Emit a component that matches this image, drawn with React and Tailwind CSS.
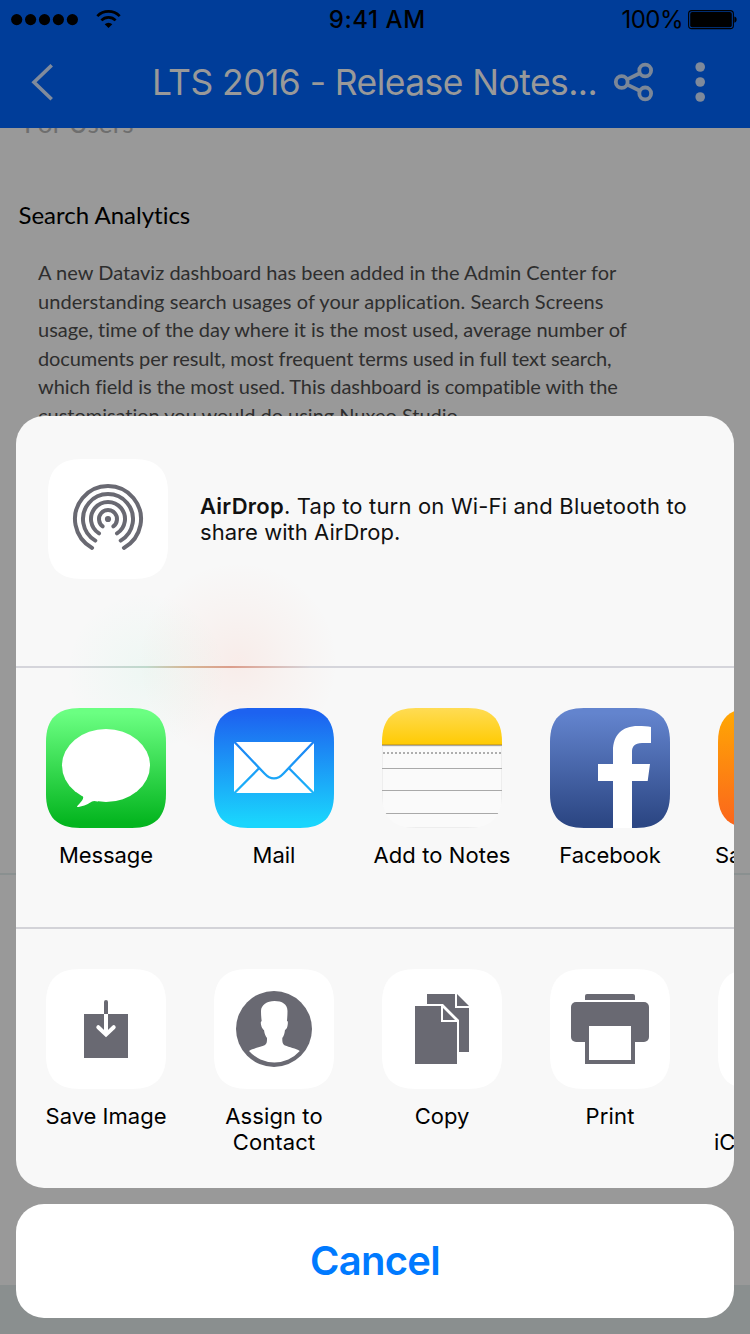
const TILE = "M0 34C0 11 11 0 34 0H86C109 0 120 11 120 34V86C120 109 109 120 86 120H34C11 120 0 109 0 86Z";

function StatusBar() {
  return (
    <div className="flex h-10 items-center justify-between pl-[11px] pr-3 text-black">
      <svg className="h-10 w-[112px]" viewBox="11 0 112 40">
        {[16.7, 30.6, 44.5, 58.4, 72.4].map((x) => (
          <circle key={x} cx={x} cy="19.6" r="5.6" />
        ))}
        <g fill="none" stroke="#000" strokeWidth="2.7">
          <path d="M97.3 16.1A15.8 15.8 0 0 1 119.7 16.1" />
          <path d="M101.4 20.4A9.9 9.9 0 0 1 115.6 20.4" />
        </g>
        <path d="M104.7 24.2A5.4 5.4 0 0 1 112.3 24.2L108.5 28Z" />
      </svg>
      <div className="ml-[10px] whitespace-nowrap text-[24px] font-medium leading-10 tracking-[0.6px]">9:41 AM</div>
      <div className="flex items-center">
        <span className="mr-[5px] whitespace-nowrap text-[24px] leading-10 tracking-[-0.5px]">100%</span>
        <svg className="h-10 w-[50px]" viewBox="688 0 50 40">
          <rect x="688.6" y="10.6" width="44.8" height="18" rx="3.2" fill="none" stroke="#000" strokeWidth="1.1" />
          <rect x="690.2" y="12" width="41.6" height="15.2" rx="2" />
          <path d="M734.4 16.5C737.4 17 737.4 22.2 734.4 22.7Z" />
        </svg>
      </div>
    </div>
  );
}

function NavBar() {
  return (
    <div className="flex h-[88px] items-center">
      <svg className="h-[88px] w-[152px] shrink-0" viewBox="0 40 152 88">
        <path d="M51.7 65.2L34 82.2L51.7 99.2" fill="none" stroke="#808b9c" strokeWidth="3.6" />
      </svg>
      <h1 className="mb-0.5 w-[448px] whitespace-nowrap text-[35.5px] font-normal leading-[44px] tracking-[-0.57px] text-[#999999]">
        LTS 2016 - Release Notes...
      </h1>
      <svg className="h-[88px] w-[150px] shrink-0" viewBox="600 40 150 88">
        <g fill="none" stroke="#7b8798" strokeWidth="3.8">
          <circle cx="621.7" cy="82" r="5.9" />
          <circle cx="645.2" cy="70.5" r="5.9" />
          <circle cx="645.2" cy="93.4" r="5.9" />
          <path d="M627.2 79.4L639.8 73.2M627.2 84.6L639.8 90.8" />
        </g>
        <g fill="#7f8a9b">
          <circle cx="700.2" cy="67" r="4.8" />
          <circle cx="700.2" cy="82" r="4.8" />
          <circle cx="700.2" cy="97" r="4.8" />
        </g>
      </svg>
    </div>
  );
}

function Article() {
  return (
    <main className="h-[1206px] overflow-hidden bg-[#999999] font-[Lato,sans-serif] [font-variant-ligatures:none]">
      <p className="-mt-[21px] pl-[24px] text-[26px] leading-8 tracking-[0.2px] text-[#6e6e6e]">For Users</p>
      <h2 className="mt-[62px] whitespace-nowrap pl-[18.5px] text-[24px] leading-7 text-black">Search Analytics</h2>
      <div className="mt-[29px] whitespace-nowrap pl-[38px] text-[20px] leading-[28.5px] text-[#2e2e2e]">
        <p className="tracking-[0.03px]">A new Dataviz dashboard has been added in the Admin Center for</p>
        <p className="tracking-[0.06px]">understanding search usages of your application. Search Screens</p>
        <p className="tracking-[-0.02px]">usage, time of the day where it is the most used, average number of</p>
        <p className="tracking-[-0.11px]">documents per result, most frequent terms used in full text search,</p>
        <p className="tracking-[-0.06px]">which field is the most used. This dashboard is compatible with the</p>
        <p className="tracking-[-0.02px]">customisation you would do using Nuxeo Studio.</p>
      </div>
      <div className="mt-[444px] h-0.5 bg-[#8a9090]" />
      <div className="mt-[410px] h-[49px] bg-[#8a8f8f]" />
    </main>
  );
}

function Tile({ children }) {
  return (
    <svg className="block size-[120px] shrink-0" viewBox="0 0 120 120">
      <path d={TILE} fill="#fff" />
      {children}
    </svg>
  );
}

function AirDropIcon() {
  return (
    <Tile>
      <g fill="none" stroke="#696972" strokeWidth="4" strokeLinecap="round">
        <path d="M44.1 88.9A33 33 0 1 1 75.9 88.9" />
        <path d="M47.3 81.6A25 25 0 1 1 72.7 81.6" />
        <path d="M51 74.4A17 17 0 1 1 69 74.4" />
        <path d="M54.7 67.3A9 9 0 1 1 65.3 67.3" />
      </g>
      <circle cx="60" cy="60" r="3.1" fill="#696972" />
    </Tile>
  );
}

function AppIcon({ id, from, to, children }) {
  return (
    <svg className="block size-[120px] shrink-0" viewBox="0 0 120 120">
      <defs>
        <linearGradient id={id} gradientUnits="userSpaceOnUse" x1="0" y1="5" x2="0" y2="115">
          <stop stopColor={from} />
          <stop offset="1" stopColor={to} />
        </linearGradient>
        <clipPath id={id + "-clip"}>
          <path d={TILE} />
        </clipPath>
      </defs>
      <g clipPath={`url(#${id}-clip)`}>
        <rect width="120" height="120" fill={`url(#${id})`} />
        {children}
      </g>
    </svg>
  );
}

const MessageIcon = () => (
  <AppIcon id="message" from="#6bff82" to="#04b51f">
    <ellipse cx="60" cy="57.5" rx="44" ry="36.5" fill="#fff" />
    <path d="M35 86C39 89 37.5 91.5 31.3 98C30.6 99 31.5 99.3 32.5 99C38 98.5 43 95.5 46 93.6C47.5 92.6 49 93 52 93.4L50 80Z" fill="#fff" />
  </AppIcon>
);

const MailIcon = () => (
  <AppIcon id="mail" from="#1d62f0" to="#1ad5fd">
    <rect x="20" y="34" width="80" height="51" fill="#fff" />
    <g fill="none" stroke="url(#mail)" strokeWidth="2.3">
      <path d="M20 33.5L50.5 65.5C56.5 72 63.5 72 69.5 65.5L100 33.5" />
      <path d="M20 85.5L45 60.3M100 85.5L75 60.3" />
    </g>
  </AppIcon>
);

const NotesIcon = () => (
  <svg className="block size-[120px] shrink-0" viewBox="0 0 120 120">
    <defs>
      <linearGradient id="notes" x1="0" y1="0" x2="0" y2="1">
        <stop stopColor="#ffdc54" />
        <stop offset="1" stopColor="#ffcb04" />
      </linearGradient>
      <clipPath id="notes-clip">
        <path d={TILE} />
      </clipPath>
    </defs>
    <g clipPath="url(#notes-clip)">
      <rect width="120" height="120" fill="#fafafa" />
      <path d="M0.3 37V98M119.7 37V98M22 119.7H98" fill="none" stroke="#ebebeb" strokeWidth="1" />
      <rect width="120" height="36.3" fill="url(#notes)" />
      <rect y="36" width="120" height="1" fill="#d6a818" />
      <rect y="37" width="120" height="1" fill="#a9a79f" />
      <rect y="38" width="120" height="1" fill="#ececec" />
      <path d="M1 45H119" stroke="#aeaeae" strokeWidth="2" strokeDasharray="2 2" />
      <path d="M0 60.5H120M0 82.5H120M3 105.5H117" stroke="#a9a9a9" strokeWidth="1" />
    </g>
  </svg>
);

const FacebookIcon = () => (
  <AppIcon id="facebook" from="#6384ce" to="#2c4784">
    <path d="M63 120V73H48V56H63V43C63 27 72 18 88 18C93 18 98 18.3 101 19V35H92C84.5 35 82 38.5 82 44V56H100L97.7 73H82V120Z" fill="#fff" />
  </AppIcon>
);

const OrangeIcon = () => <AppIcon id="orange" from="#ffa604" to="#fb671c" />;

const SaveIcon = () => (
  <Tile>
    <rect x="38" y="45" width="44" height="44" fill="#696972" />
    <path d="M60 45V33" stroke="#696972" strokeWidth="4" />
    <circle cx="60" cy="33" r="2" fill="#696972" />
    <path d="M60 45V65" stroke="#fff" strokeWidth="4" />
    <path d="M52.3 58.2L60 65.6L67.7 58.2" fill="none" stroke="#fff" strokeWidth="4" strokeLinecap="round" />
  </Tile>
);

const ContactIcon = () => (
  <Tile>
    <circle cx="60" cy="60" r="38" fill="#696972" />
    <path
      fill="#fff"
      d="M35 82C39 79.5 46 78 50 76.5C53 75 53 73 53 69C51.5 67 50.5 65 50 61C48.5 60.5 47 57 46.8 54C46.7 52.5 47.3 52.3 47.7 52.3C47.3 49 47 46 47 42C47 36 53 32 60.5 32C68 32 73.5 35 73.5 42C73.5 46 73.2 49 73 52C73.8 52 74 53 73.8 55C73.5 58 72.5 60.5 71 61C70.5 65 69.8 67 68.3 69C68.3 73 68.5 75 71 76.5C75 78 82 79.5 85.8 82A34 34 0 0 1 35 82Z"
    />
  </Tile>
);

const CopyIcon = () => (
  <Tile>
    <g fill="#696972">
      <path d="M45 25H73V39H87V83H77V51L61 35H45Z" />
      <path d="M75 25L87 37H75Z" />
      <path d="M33 37H59V53H75V95H33Z" />
      <path d="M61 39L73 51H61Z" />
    </g>
  </Tile>
);

const PrintIcon = () => (
  <Tile>
    <g fill="#696972">
      <path d="M35 31V27Q35 25 37 25H83Q85 25 85 27V31Z" />
      <rect x="21" y="33" width="78" height="40" rx="5" />
      <rect x="35" y="60" width="50" height="35" />
    </g>
    <rect x="39" y="57" width="42" height="34" fill="#fff" />
  </Tile>
);

function Item({ icon, children }) {
  return (
    <div className="flex w-[168px] shrink-0 flex-col items-center">
      {icon}
      <div className="mt-3.5 whitespace-nowrap text-center text-[22px] leading-[26px] text-black">{children}</div>
    </div>
  );
}

export default function App() {
  return (
    <div className="relative h-[1334px] w-[750px] overflow-hidden font-[Inter,sans-serif]">
      <header className="h-[128px] bg-[#003d99]">
        <StatusBar />
        <NavBar />
      </header>
      <Article />

      <div className="absolute inset-x-4 bottom-4 flex flex-col gap-4">
        <section className="h-[772px] overflow-hidden rounded-[28px] bg-[#f8f8f8] bg-[radial-gradient(circle_at_222px_246px,rgba(255,100,60,0.08),rgba(255,100,60,0.035)_50px,transparent_100px),radial-gradient(circle_at_130px_256px,rgba(60,230,160,0.05),transparent_80px)]">
          <div className="flex h-[250px] pl-8 pt-[43px]">
            <AirDropIcon />
            <p className="ml-8 mt-[34px] whitespace-nowrap text-[22px] leading-[26px] text-[#111111]">
              <span className="font-semibold tracking-[0.25px]">AirDrop</span>
              <span className="tracking-[0.18px]">. Tap to turn on Wi-Fi and Bluetooth to</span>
              <br />
              <span className="tracking-[0.04px]">share with AirDrop.</span>
            </p>
          </div>
          <div className="h-0.5 bg-[linear-gradient(90deg,#d5d5db_60px,#bfd9cc_130px,#d6b795_170px,#dc9e8c_215px,#dcb5ac_250px,#d5d5db_295px)]" />
          <div className="flex h-[259px] pl-1.5 pt-10">
            <Item icon={<MessageIcon />}><span className="tracking-[-0.1px]">Message</span></Item>
            <Item icon={<MailIcon />}>Mail</Item>
            <Item icon={<NotesIcon />}><span className="tracking-[0.1px]">Add to Notes</span></Item>
            <Item icon={<FacebookIcon />}><span className="tracking-[-0.1px]">Facebook</span></Item>
            <div className="w-[168px] shrink-0">
              <div className="pl-6"><OrangeIcon /></div>
              <div className="mt-3.5 pl-[21px] text-[22px] leading-[26px] text-black">Sa</div>
            </div>
          </div>
          <div className="h-0.5 bg-[#d3d3d8]" />
          <div className="flex h-[259px] pl-1.5 pt-10">
            <Item icon={<SaveIcon />}>Save Image</Item>
            <Item icon={<ContactIcon />}>
              <span className="tracking-[0.1px]">Assign to<br />Contact</span>
            </Item>
            <Item icon={<CopyIcon />}>Copy</Item>
            <Item icon={<PrintIcon />}><span className="tracking-[0.2px]">Print</span></Item>
            <div className="w-[168px] shrink-0">
              <div className="pl-6"><Tile /></div>
              <div className="mt-10 pl-[20px] text-[22px] leading-[26px] text-black">iC</div>
            </div>
          </div>
        </section>
        <button className="h-[114px] rounded-[28px] bg-white text-[40px] font-semibold leading-[48px] tracking-[-0.7px] text-[#007aff]">
          Cancel
        </button>
      </div>
    </div>
  );
}
